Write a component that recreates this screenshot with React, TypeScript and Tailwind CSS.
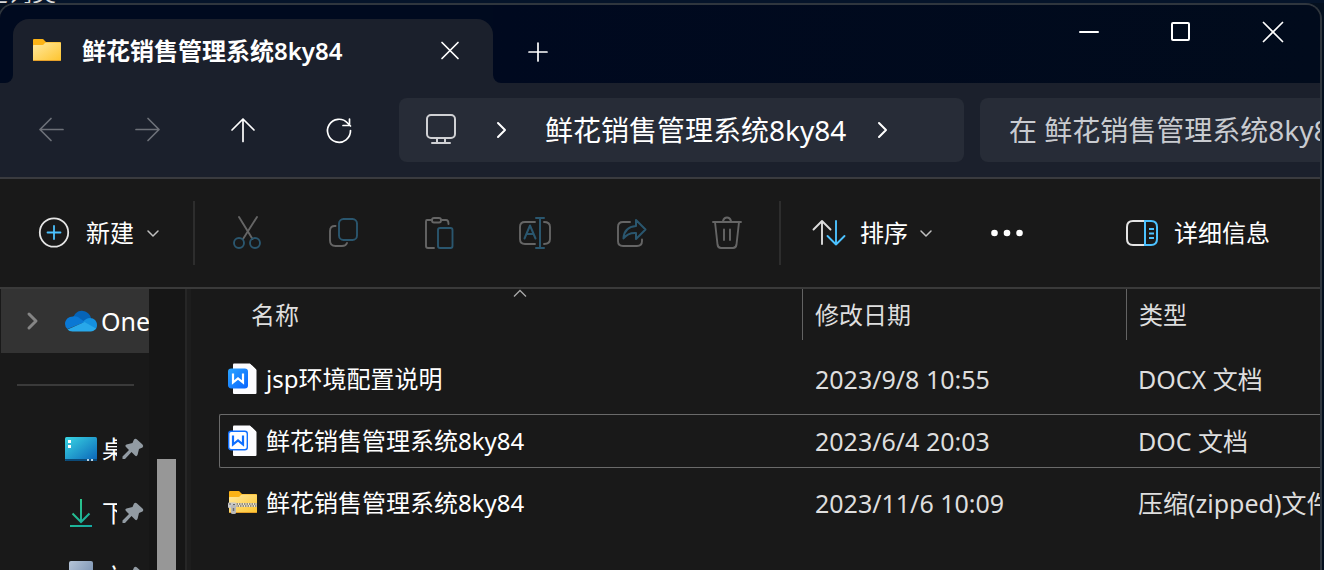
import type { ReactNode } from "react";

const FOLDER_NAME = "鲜花销售管理系统8ky84";

const files = [
  { name: "jsp环境配置说明", date: "2023/9/8 10:55", type: "DOCX 文档", icon: "docx", selected: false },
  { name: FOLDER_NAME, date: "2023/6/4 20:03", type: "DOC 文档", icon: "doc", selected: true },
  { name: FOLDER_NAME, date: "2023/11/6 10:09", type: "压缩(zipped)文件夹", icon: "zip", selected: false },
];

function FolderShape({ id }: { id: string }) {
  return (
    <>
      <defs>
        <linearGradient id={id} x1="0" y1="0" x2="1" y2="1">
          <stop offset="0" stopColor="#ffe9a0" />
          <stop offset="1" stopColor="#fec42d" />
        </linearGradient>
      </defs>
      <path d="M0 1Q0 0 1 0H9.500q1 0 1.500 1l2 2h14q1 0 1 1v8H0z" fill="#fcb316" />
      <path d="M0 6.500Q0 6 1 6h8.500q1 0 1.500-1l1-1q.5-.5 1-.5h14q1 0 1 1V21q0 1-1 1H1q-1 0-1-1z" fill={`url(#${id})`} />
      <path d="M0.500 21.500h27" stroke="#e5a02a" />
    </>
  );
}

function FolderIcon() {
  return (
    <svg width="30" height="24" viewBox="-1 0 30 24" className="shrink-0" aria-hidden="true">
      <FolderShape id="tabFolder" />
    </svg>
  );
}

function ZipIcon() {
  return (
    <svg width="30" height="32" viewBox="-1 -4 30 32" className="shrink-0" aria-hidden="true">
      <FolderShape id="zipFolder" />
      <path d="M5 14h23" stroke="#f0e6c8" strokeWidth="4" />
      <path d="M5 13h23" stroke="#77736a" strokeWidth="1.500" strokeDasharray="1.500 1" />
      <path d="M6 15h22" stroke="#77736a" strokeWidth="1.500" strokeDasharray="1.500 1" />
      <rect x="-1" y="11.500" width="8" height="5.500" rx="1" fill="#c9c9c9" />
      <rect x="2" y="14" width="5" height="9" rx="1.500" fill="#b9b9b9" />
      <path d="M4.500 17v3" stroke="#6d6d6d" strokeWidth="1.500" />
      <path d="M0 13h2M4 13.500h2" stroke="#666" />
    </svg>
  );
}

function WpsIcon({ outlined }: { outlined: boolean }) {
  return (
    <svg width="30" height="32" viewBox="0 0 30 32" className="shrink-0" aria-hidden="true">
      <defs>
        <linearGradient id="wps" x1="0" y1="0" x2="1" y2="1">
          <stop offset="0" stopColor="#2aa3ff" />
          <stop offset="1" stopColor="#0a66ff" />
        </linearGradient>
      </defs>
      <path d="M6 0.500h16l6.500 6V30a1 1 0 0 1-1 1H6a1 1 0 0 1-1-1V1.500a1 1 0 0 1 1-1z" fill="#fcfcff" />
      <path d="M22 0h7v7z" fill="#191919" />
      <path d="M23.500 2v4h4z" fill="#fff" />
      <rect
        x="0.700"
        y="6.200"
        width="18.600"
        height="18.600"
        rx="2.500"
        fill={outlined ? "#fff" : "url(#wps)"}
        stroke={outlined ? "#0f6fff" : "url(#wps)"}
        strokeWidth="1.400"
      />
      <path
        d="M5 10.500v9l5-4 5 4v-9"
        fill="none"
        stroke={outlined ? "#0f6fff" : "#fff"}
        strokeWidth="2.200"
        strokeLinejoin="miter"
      />
    </svg>
  );
}

function FileIcon({ kind }: { kind: string }) {
  if (kind === "zip") return <ZipIcon />;
  return <WpsIcon outlined={kind === "doc"} />;
}

function Line({ d, size = 32, width = 2, color = "currentColor" }: { d: string; size?: number; width?: number; color?: string }) {
  return (
    <svg
      width={size}
      height={size}
      viewBox={`0 0 ${size} ${size}`}
      fill="none"
      stroke={color}
      strokeWidth={width}
      className="shrink-0"
      aria-hidden="true"
    >
      <path d={d} strokeLinecap="round" strokeLinejoin="round" />
    </svg>
  );
}

function NavButton({ label, disabled = false, children }: { label: string; disabled?: boolean; children: ReactNode }) {
  return (
    <button
      aria-label={label}
      disabled={disabled}
      className="flex h-16 w-24 items-center justify-center text-white disabled:text-[#6d7078]"
    >
      {children}
    </button>
  );
}

function TitleBar() {
  return (
    <div className="flex h-[78px] bg-[#1b202c]">
      <div className="w-[13px] shrink-0 rounded-br-lg bg-[#000a1f]" />
      <div className="w-[480px] shrink-0 bg-[#000a1f] pt-3.5">
        <div className="flex h-16 items-center rounded-t-2xl bg-[#1b202c] pl-[19px] pr-[25px]">
          <FolderIcon />
          <span className="ml-5 flex-1 text-2xl font-semibold leading-8 text-white">{FOLDER_NAME}</span>
          <button aria-label="关闭标签页" className="text-white">
            <Line size={36} d="M10 9.500l16 16M26 9.500l-16 16" width={1.7} />
          </button>
        </div>
      </div>
      <div className="flex flex-1 items-start justify-between rounded-bl-lg bg-gradient-to-r from-[#00091f] to-[#010b1c] pr-px">
        <button aria-label="新建标签页" className="mt-[31px] ml-[29px] text-white">
          <Line size={32} d="M16 7v18M7 16h18" width={1.7} />
        </button>
        <div className="flex h-[54px] text-white">
          <button aria-label="最小化" className="flex w-[92px] items-center justify-center">
            <Line d="M7 16h18" />
          </button>
          <button aria-label="最大化" className="flex w-[92px] items-center justify-center">
            <Line d="M8 7h15q1 0 1 1v15q0 1-1 1H8q-1 0-1-1V8q0-1 1-1z" />
          </button>
          <button aria-label="关闭" className="flex w-[92px] items-center justify-center">
            <Line d="M6.500 6.500l19 19M25.500 6.500l-19 19" width={1.7} />
          </button>
        </div>
      </div>
    </div>
  );
}

function AddressBar() {
  return (
    <div className="flex border-b-2 border-[#3a3b3f] bg-[#1b202c] pt-[15px] pb-[15px]">
      <nav className="flex shrink-0 pl-[3px]">
        <NavButton label="后退" disabled>
          <Line d="M28 15.500H5M16 4.500l-11 11 11 11" width={1.7} />
        </NavButton>
        <NavButton label="前进" disabled>
          <Line d="M5 15.500h23M17 4.500l11 11-11 11" width={1.7} />
        </NavButton>
        <NavButton label="上移">
          <Line d="M16 27.500V5M5 16L16 5l11 11" width={1.7} />
        </NavButton>
        <NavButton label="刷新">
          <Line d="M27.500 16.500a11.500 11.500 0 1 1-3-7.500l3 3M26.500 5v6.500h-6.500" width={1.7} />
        </NavButton>
      </nav>
      <div className="ml-3 flex h-16 flex-1 items-center rounded-lg bg-[#272c37] text-white">
        <button aria-label="此电脑" className="ml-[26px] text-[#d0d1d4]">
          <svg width="32" height="32" viewBox="0 0 32 32" fill="none" stroke="currentColor" strokeWidth="2" aria-hidden="true">
            <rect x="2" y="1" width="28" height="23" rx="4" />
            <path d="M12 24v5M20 24v5M7 29h18" strokeLinecap="round" />
          </svg>
        </button>
        <button aria-label="展开此电脑" className="ml-7">
          <Line d="M13 9l7 7-7 7" />
        </button>
        <span className="ml-7 whitespace-nowrap text-[28px] leading-9">{FOLDER_NAME}</span>
        <button aria-label="展开文件夹" className="ml-5">
          <Line d="M13 9l7 7-7 7" />
        </button>
      </div>
      <div className="ml-4 h-16 w-[340px] shrink-0 overflow-hidden rounded-l-lg bg-[#272c37]">
        <input
          aria-label="搜索"
          placeholder={`在 ${FOLDER_NAME} 中搜索`}
          className="h-full w-full bg-transparent pl-[29px] text-[28px] text-white outline-none placeholder:text-[#c9cbd0]"
        />
      </div>
    </div>
  );
}

function ToolButton({ label, children }: { label: string; children: ReactNode }) {
  return (
    <button aria-label={label} disabled className="flex h-16 w-24 items-center justify-center">
      <svg
        width="36"
        height="36"
        viewBox="0 0 36 36"
        fill="none"
        stroke="#656565"
        strokeWidth="1.900"
        strokeLinecap="round"
        strokeLinejoin="round"
        aria-hidden="true"
      >
        {children}
      </svg>
    </button>
  );
}

const SMALL_CHEVRON = "M3 6l5 5 5-5";

function CommandBar() {
  return (
    <div className="flex items-center border-b-2 border-[#3a3a3a] bg-[#191919] pt-[22px] pb-[22px] text-white">
      <button className="flex h-16 w-[193px] shrink-0 items-center pl-[38px] text-2xl leading-8">
        <svg width="32" height="32" viewBox="0 0 32 32" fill="none" strokeLinecap="round" aria-hidden="true">
          <circle cx="16" cy="15.500" r="14.200" stroke="#e4e4e4" strokeWidth="1.800" />
          <path d="M16 9v13M9.500 15.500h13" stroke="#4cc2ff" strokeWidth="1.800" />
        </svg>
        <span className="ml-4 mr-[11px]">新建</span>
        <Line size={16} d={SMALL_CHEVRON} width={1.5} color="#c0c0c0" />
      </button>
      <div className="flex shrink-0 border-x-2 border-[#2d2d2d] pl-1 pr-1">
        <ToolButton label="剪切">
          <path d="M10 2l13.500 22M28 2L14 24" />
          <circle cx="10" cy="28" r="5" stroke="#2a566e" />
          <circle cx="26" cy="28" r="5" stroke="#2a566e" />
        </ToolButton>
        <ToolButton label="复制">
          <path d="M10.500 11Q5 10.500 5 16v9.500Q5 31 10.500 31H17q4 0 5-3" />
          <rect x="14" y="4" width="18" height="21" rx="4.500" stroke="#2a566e" />
        </ToolButton>
        <ToolButton label="粘贴">
          <path d="M11 5H6Q5 5 5 6.500V31q0 2 2 2h6M20 5h5q2.500 0 2.500 4" />
          <rect x="11" y="3" width="9" height="4.500" rx="2" />
          <rect x="17" y="13" width="14.500" height="20" rx="2" stroke="#2a566e" />
        </ToolButton>
        <ToolButton label="重命名">
          <path d="M18 7H8q-5 0-5 5v12q0 5 5 5h10M27 7q6 0 6 5v12q0 5-6 5" />
          <path d="M7.500 23.500L13 10.500l5.500 13M9.500 19h7M19 3h8M23 3v30M19 33h8" stroke="#2a566e" strokeWidth="2" />
        </ToolButton>
        <ToolButton label="共享">
          <path d="M17 7H10q-5 0-5 5v14q0 5 5 5h14q5 0 5-5v-1.500" />
          <path d="M23 5l9.500 9.500L23 24v-6q-8-.5-12.500 5.500Q11 12 23 11z" stroke="#2a566e" strokeWidth="2" />
        </ToolButton>
        <ToolButton label="删除">
          <path d="M4 7h28M14 6q1-3.500 4-3.500T22 6M6 7l2.500 22.500Q9 33 12 33h12q3 0 3.500-3.500L30 7M15 14.500V25M21 14.500V25" />
        </ToolButton>
      </div>
      <button className="ml-[31px] flex h-16 shrink-0 items-center text-2xl leading-8">
        <svg width="36" height="32" viewBox="0 0 36 32" fill="none" strokeWidth="1.900" strokeLinecap="round" strokeLinejoin="round" aria-hidden="true">
          <path d="M10 27V4M1.500 12.500L10 4l8.500 8.500" stroke="#dcdcdc" />
          <path d="M24 4v23.500M15.500 19L24 27.500l8.500-8.500" stroke="#4cc2ff" />
        </svg>
        <span className="ml-3 mr-2.5">排序</span>
        <Line size={16} d={SMALL_CHEVRON} width={1.5} color="#c0c0c0" />
      </button>
      <button aria-label="查看更多" className="ml-14 shrink-0">
        <svg width="34" height="16" viewBox="0 0 34 16" fill="#fff" aria-hidden="true">
          <circle cx="4.500" cy="8" r="3.300" />
          <circle cx="17" cy="8" r="3.300" />
          <circle cx="29.500" cy="8" r="3.300" />
        </svg>
      </button>
      <button className="ml-auto mr-[50px] flex h-16 shrink-0 items-center text-2xl leading-8">
        <svg width="34" height="32" viewBox="0 0 34 32" fill="none" strokeWidth="2" aria-hidden="true">
          <path d="M19 4H7Q1 4 1 10v12q0 6 6 6h12" stroke="#e4e4e4" />
          <path d="M19 4h6q6 0 6 6v12q0 6-6 6h-6zM23 12h5M23 16.500h5M23 21h5" stroke="#4cc2ff" />
        </svg>
        <span className="ml-3.5">详细信息</span>
      </button>
    </div>
  );
}

function PinIcon() {
  return (
    <svg width="22" height="22" viewBox="0 0 22 22" className="shrink-0" aria-hidden="true">
      <path
        d="M12 1.500q1.500-1.500 3 0l5.500 5q1.500 1.500 0 3L17 11l-1.500 6q-1 2-2.500.5l-3.500-3.500L3 21H0.500v-2.500L7 12 4 9q-1.500-1.500.5-2.500L10.500 5z"
        fill="#929ba3"
      />
    </svg>
  );
}

function PinnedItem({ label, icon }: { label: string; icon: ReactNode }) {
  return (
    <li>
      <a href="#" className="flex h-16 items-center pl-[65px] text-2xl leading-8 text-white">
        <span className="w-8 shrink-0">{icon}</span>
        <span className="ml-[5px] mr-[5px] w-[15px] shrink-0 overflow-hidden whitespace-nowrap">{label}</span>
        <PinIcon />
      </a>
    </li>
  );
}

function DesktopIcon() {
  return (
    <svg width="32" height="24" viewBox="0 0 32 24" aria-hidden="true">
      <defs>
        <linearGradient id="desktop" x1="0" y1="0" x2="1" y2="1">
          <stop offset="0" stopColor="#3ad6e3" />
          <stop offset="1" stopColor="#0a63b8" />
        </linearGradient>
      </defs>
      <rect width="32" height="24" rx="1.500" fill="url(#desktop)" />
      <path d="M0 22h32v.5q0 1.500-1.500 1.500h-29Q0 24 0 22.500z" fill="#0b4a78" />
      <path d="M3 3h3v3H3zM3 8h3v3H3z" fill="#fff" />
      <path d="M22 22h2v2h-2zM26 22h2v2h-2z" fill="#b9d3e6" />
    </svg>
  );
}

function DownloadIcon() {
  return (
    <svg width="32" height="32" viewBox="0 0 32 32" fill="none" strokeWidth="2" aria-hidden="true">
      <defs>
        <linearGradient id="download" x1="0" y1="0" x2="28" y2="32" gradientUnits="userSpaceOnUse">
          <stop offset="0" stopColor="#35d07f" />
          <stop offset="1" stopColor="#12a5a5" />
        </linearGradient>
      </defs>
      <path d="M16 2v23M7.500 16.500L16 25l8.500-8.500M5 29h22" stroke="url(#download)" />
    </svg>
  );
}

function DocumentsIcon() {
  return (
    <svg width="32" height="32" viewBox="0 0 32 32" aria-hidden="true">
      <defs>
        <linearGradient id="documents" x1="0" y1="0" x2="1" y2="1">
          <stop offset="0" stopColor="#b6c5d8" />
          <stop offset="1" stopColor="#6681a5" />
        </linearGradient>
      </defs>
      <rect x="4" width="24" height="32" rx="2" fill="url(#documents)" />
    </svg>
  );
}

function Sidebar() {
  return (
    <aside className="flex w-[191px] shrink-0 overflow-hidden">
      <div className="w-[149px] shrink-0">
        <a href="#" className="ml-px flex h-16 items-center overflow-hidden bg-[#333] pl-4 leading-8 text-white">
          <Line d="M12 9l7 7-7 7" width={3} color="#858585" />
          <svg width="32" height="22" viewBox="0 0 32 22" className="ml-4 shrink-0" aria-hidden="true">
            <path d="M8 9C9 3 14 0 18 1c4 .5 7 3 8 7l-8 6z" fill="#0664b8" />
            <path d="M8 6.500c3-.5 5 .5 7 2l5 3.500L2.500 19Q0 17 0 14c0-4.500 3.500-7.500 8-7.500z" fill="#0a78d4" />
            <path d="M25 8c4 0 7 3 7 7 0 2-.5 3-1.500 4.500L18 12q3-4 7-4z" fill="#1490df" />
            <path d="M2.500 19.500L19.500 12 31 18.500Q29 21.500 25.500 21.500H7.500Q4 21.500 2.500 19.500z" fill="#28a8ea" />
          </svg>
          <span className="ml-1 text-[25px]">OneDrive</span>
        </a>
        <hr className="mt-[31px] ml-[17px] mr-[15px] border-t-2 border-[#3a3a3a]" />
        <ul className="mt-[31px]">
          <PinnedItem label="桌面" icon={<DesktopIcon />} />
          <PinnedItem label="下载" icon={<DownloadIcon />} />
          <PinnedItem label="文档" icon={<DocumentsIcon />} />
        </ul>
      </div>
      <div className="flex-1 bg-[#161616] pl-2 pt-[170px]">
        <div className="h-full w-[19px] bg-[#979797]" />
      </div>
      <div className="w-[6px] border-l-2 border-[#262626] bg-[#1d1d1d]" />
    </aside>
  );
}

function FileList() {
  return (
    <main className="relative min-w-0 flex-1 overflow-hidden pl-7">
      <svg width="16" height="10" viewBox="0 0 16 10" fill="none" stroke="#a8a8a8" strokeWidth="1.300" className="absolute left-[321px] top-0" aria-hidden="true">
        <path d="M2 7.500l6-6 6 6" />
      </svg>
      <table className="-mt-2 w-full table-fixed border-separate border-spacing-x-0 border-spacing-y-2 text-2xl leading-8 text-[#dedede]">
        <thead>
          <tr className="h-[55px] text-left align-top">
            <th className="p-0 font-normal">
              <div className="flex h-[51px] items-center pl-8">名称</div>
            </th>
            <th className="w-[324px] p-0 font-normal">
              <div className="flex h-[51px] items-center border-l border-[#636363] pl-3">修改日期</div>
            </th>
            <th className="w-[194px] p-0 font-normal">
              <div className="flex h-[51px] items-center border-l border-[#636363] pl-3">类型</div>
            </th>
          </tr>
        </thead>
        <tbody>
          {files.map((file) => {
            const line = file.selected ? "border-[#6a6a6a]" : "border-transparent";
            return (
              <tr key={file.date} className="h-[54px] whitespace-nowrap">
                <td className={`rounded-l-xs border-y border-l p-0 pl-2 ${line}`}>
                  <div className="flex items-center gap-2 text-white">
                    <FileIcon kind={file.icon} />
                    {file.name}
                  </div>
                </td>
                <td className={`border-y p-0 pl-[13px] text-[25px] ${line}`}>{file.date}</td>
                <td className={`overflow-hidden border-y p-0 pl-3 text-[25px] ${line}`}>{file.type}</td>
              </tr>
            );
          })}
        </tbody>
      </table>
    </main>
  );
}

export default function App() {
  return (
    <div className="relative h-screen overflow-hidden bg-[#04101f] pr-0.5 pt-[3px] font-['Noto_Sans','Noto_Sans_CJK_SC',sans-serif]">
      <div className="absolute left-0 top-0 h-[3px] w-full overflow-hidden bg-[#05142a]">
        <p className="-ml-4 -mt-[22px] text-2xl leading-7 text-[#d8d8d8]">定词类</p>
      </div>
      <div className="relative -ml-0.5 flex h-full flex-col overflow-hidden rounded-t-2xl border-2 border-b-0 border-[#2f363e] bg-[#191919]">
        <TitleBar />
        <AddressBar />
        <CommandBar />
        <div className="flex min-h-0 flex-1">
          <Sidebar />
          <FileList />
        </div>
      </div>
    </div>
  );
}
